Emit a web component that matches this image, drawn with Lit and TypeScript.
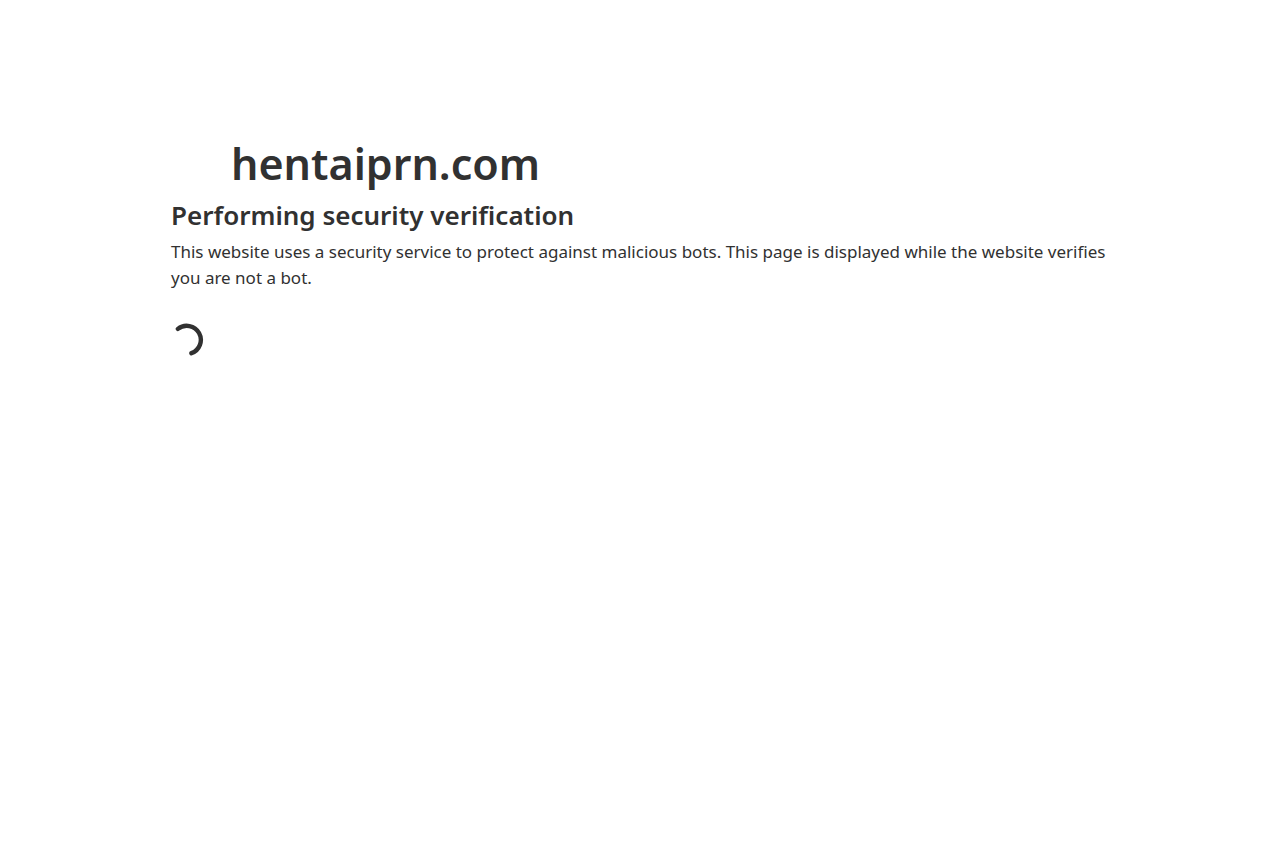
import { LitElement, html, css } from "lit";
import { customElement } from "lit/decorators.js";

@customElement("app-root")
export class AppRoot extends LitElement {
  static styles = css`
    :host {
      display: block;
      box-sizing: border-box;
      min-height: 100vh;
      padding-top: 8rem;
      background: #fff;
      color: #313131;
      font-family: "Noto Sans", sans-serif;
    }
    main {
      box-sizing: border-box;
      max-width: 60rem;
      margin: 0 auto;
      padding: 0 11px;
    }
    .site {
      display: flex;
      align-items: center;
      gap: 8px;
      min-height: 71px;
    }
    .favicon {
      width: 52px;
      height: 32px;
      flex: none;
    }
    h1 {
      margin: 0;
      font-size: 43px;
      font-weight: 600;
      line-height: 60px;
    }
    h2 {
      margin: 0;
      font-size: 26px;
      font-weight: 600;
      line-height: 32px;
    }
    p {
      margin: 8px 0 32px;
      font-size: 17px;
      line-height: 26px;
    }
    .spinner {
      display: block;
      width: 34px;
      height: 34px;
    }
  `;

  render() {
    return html`
      <main>
        <div class="site">
          <span class="favicon"></span>
          <h1>hentaiprn.com</h1>
        </div>
        <h2>Performing security verification</h2>
        <p>
          This website uses a security service to protect against malicious
          bots. This page is displayed while the website verifies you are not a
          bot.
        </p>
        <svg class="spinner" viewBox="0 0 34 34" role="img" aria-label="Verifying">
          <path
            d="M6.9 5.9A14.1 14.1 0 1 1 20.4 30.2"
            fill="none"
            stroke="#313131"
            stroke-width="4.4"
            stroke-linecap="round"
          />
        </svg>
      </main>
    `;
  }
}
